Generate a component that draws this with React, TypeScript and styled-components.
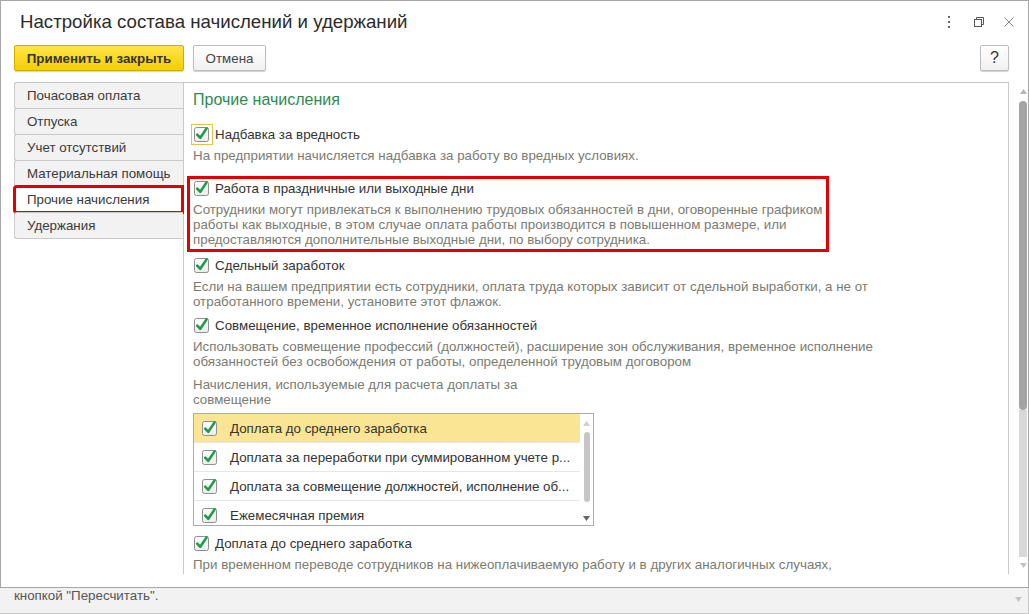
import React from "react";
import styled, { createGlobalStyle } from "styled-components";

const GlobalStyle = createGlobalStyle`
  html, body { margin: 0; padding: 0; }
  body {
    width: 1029px;
    height: 614px;
    overflow: hidden;
    background: #f2f2f2;
    font-family: "Liberation Sans", Arial, sans-serif;
    font-size: 13.33px;
    color: #333;
  }
`;

const Page = styled.div`
  width: 1029px;
  height: 614px;
  display: flex;
  flex-direction: column;
`;

const Window = styled.div`
  box-sizing: border-box;
  width: 1029px;
  height: 588px;
  border: 1px solid #a6a6a6;
  background: #fff;
  display: flex;
  flex-direction: column;
  overflow: hidden;
`;

const TitleBar = styled.div`
  height: 41px;
  display: flex;
  align-items: center;
  padding: 0 14px 0 19px;
`;

const Title = styled.div`
  font-size: 18.67px;
  color: #2b2b2b;
  flex: 1;
`;

const WinIcons = styled.div`
  display: flex;
  align-items: center;
  gap: 20px;
`;

const WinIcon = styled.span`
  width: 10px;
  height: 12px;
  display: flex;
  align-items: center;
  justify-content: center;
`;

const Toolbar = styled.div`
  margin-top: 3px;
  height: 26px;
  display: flex;
  align-items: center;
  gap: 9px;
  padding: 0 19px 0 13px;
`;

const Button = styled.button<{ $primary?: boolean }>`
  box-sizing: border-box;
  height: 26px;
  padding: 0 10px;
  font-family: inherit;
  font-size: 13.33px;
  font-weight: ${(p) => (p.$primary ? "bold" : "normal")};
  color: ${(p) => (p.$primary ? "#333" : "#444")};
  border-radius: 2px;
  border: 1px solid ${(p) => (p.$primary ? "#cfae00" : "#bdbdbd")};
  background: ${(p) =>
    p.$primary
      ? "linear-gradient(#ffe44a, #f4cf00)"
      : "linear-gradient(#ffffff, #f1f1f1)"};
  box-shadow: 0 1px 1px rgba(0, 0, 0, 0.18);
  cursor: default;
`;

const HelpButton = styled(Button)`
  margin-left: auto;
  width: 29px;
  padding: 0;
  font-size: 16px;
  color: #333;
`;

const Body = styled.div`
  flex: 1;
  margin-top: 11px;
  padding: 0 0 13px 13px;
  display: flex;
  min-height: 0;
`;

const Tabs = styled.div`
  width: 169px;
  display: flex;
  flex-direction: column;
`;

const Tab = styled.div<{ $active?: boolean; $marked?: boolean }>`
  box-sizing: border-box;
  height: 27px;
  margin-bottom: -1px;
  display: flex;
  align-items: center;
  padding-left: 12px;
  border: 1px solid #c9c9c9;
  border-right: none;
  border-radius: 3px 0 0 3px;
  background: ${(p) => (p.$active ? "#fff" : "#f2f2f2")};
  color: #3a3a3a;
  outline: ${(p) => (p.$marked ? "3px solid #e20000" : "none")};
  outline-offset: -2px;
  position: relative;
`;

const Panel = styled.div`
  box-sizing: border-box;
  width: 826px;
  border: 1px solid #c9c9c9;
  border-bottom: none;
  padding-left: 9px;
  overflow: hidden;
  display: flex;
  flex-direction: column;
`;

const Heading = styled.div`
  margin-top: 7px;
  line-height: 20px;
  font-size: 16px;
  color: #2e8b4e;
`;

const Item = styled.div<{ $mt: number; $marked?: boolean }>`
  margin-top: ${(p) => p.$mt}px;
  position: relative;
  ${(p) =>
    p.$marked
      ? `&::after {
    content: "";
    position: absolute;
    left: -6px;
    top: -2px;
    width: 636px;
    height: 70px;
    border: 3px solid #e20000;
    pointer-events: none;
  }`
      : ""}
`;

const CheckRow = styled.div`
  height: 20px;
  display: flex;
  align-items: center;
`;

const BoxSlot = styled.span<{ $focus?: boolean }>`
  box-sizing: border-box;
  width: 22px;
  height: 21px;
  margin-left: -2px;
  display: flex;
  align-items: center;
  justify-content: center;
  border: 1px solid ${(p) => (p.$focus ? "#e6c248" : "transparent")};
`;

const Label = styled.span`
  margin-left: 2px;
  color: #333;
`;

const Desc = styled.div`
  margin-top: 4px;
  line-height: 15px;
  color: #7b7b70;
  white-space: nowrap;
`;

const Caption = styled.div<{ $mt: number }>`
  margin-top: ${(p) => p.$mt}px;
  line-height: 15px;
  color: #7b7b70;
`;

const ListBox = styled.div`
  box-sizing: border-box;
  margin-top: 6px;
  width: 401px;
  height: 113px;
  flex-shrink: 0;
  border: 1px solid #ababab;
  display: flex;
  overflow: hidden;
`;

const ListRows = styled.div`
  flex: 1;
  min-width: 0;
`;

const ListRow = styled.div<{ $active?: boolean }>`
  box-sizing: border-box;
  height: 29px;
  border-bottom: 1px solid #e6e6e6;
  background: ${(p) => (p.$active ? "#fae594" : "#fff")};
  display: flex;
  align-items: center;
  padding-left: 8px;
  gap: 12px;
  white-space: nowrap;
  overflow: hidden;
  color: #333;
`;

const ListScroll = styled.div`
  width: 13px;
  display: flex;
  flex-direction: column;
  align-items: center;
  padding: 7px 0 4px;
  box-sizing: border-box;
`;

const Thumb = styled.div<{ $h: number; $color: string; $w?: number }>`
  width: ${(p) => p.$w ?? 6}px;
  height: ${(p) => p.$h}px;
  border-radius: 4px;
  background: ${(p) => p.$color};
`;

const Track = styled.div`
  flex: 1;
  width: 8px;
  background: #d8d8d8;
`;

const ScrollCol = styled.div`
  width: 18px;
  padding: 7px 0 6px 10px;
  box-sizing: border-box;
  display: flex;
  flex-direction: column;
  align-items: center;
`;

const Backdrop = styled.div`
  flex: 1;
  box-sizing: border-box;
  width: 1029px;
  border-bottom: 1px solid #c8c8c8;
  border-right: 1px solid #c8c8c8;
  display: flex;
  align-items: flex-start;
  padding-left: 14px;
  overflow: hidden;
`;

const BackText = styled.div`
  margin-top: 0;
  line-height: 15px;
  color: #555;
  flex: 1;
`;

const BackArrow = styled.div`
  width: 20px;
  margin-top: 9px;
  display: flex;
  justify-content: center;
`;

const Arrow = ({ up, color }: { up?: boolean; color: string }) => (
  <svg width="7" height="5" viewBox="0 0 7 5">
    <path d={up ? "M0 5 L3.5 0 L7 5 Z" : "M0 0 L3.5 5 L7 0 Z"} fill={color} />
  </svg>
);

const Check = () => (
  <svg width="16" height="16" viewBox="0 0 16 16" style={{ overflow: "visible" }}>
    <defs>
      <linearGradient id="cbg" x1="0" y1="0" x2="0" y2="1">
        <stop offset="0" stopColor="#ffffff" />
        <stop offset="1" stopColor="#ececec" />
      </linearGradient>
    </defs>
    <rect x="0.5" y="1.5" width="14" height="14" rx="2" fill="url(#cbg)" stroke="#8e8e8e" />
    <path d="M3.2 8.6 L6.3 11.8 L12.6 2.4" fill="none" stroke="#1f9a48" strokeWidth="2.6" strokeLinecap="round" strokeLinejoin="round" />
  </svg>
);

type Opt = { label: string; desc: string[]; mt: number; focus?: boolean; marked?: boolean };

const options: Opt[] = [
  {
    label: "Надбавка за вредность",
    desc: ["На предприятии начисляется надбавка за работу во вредных условиях."],
    mt: 14,
    focus: true,
  },
  {
    label: "Работа в праздничные или выходные дни",
    desc: [
      "Сотрудники могут привлекаться к выполнению трудовых обязанностей в дни, оговоренные графиком",
      "работы как выходные, в этом случае оплата работы производится в повышенном размере, или",
      "предоставляются дополнительные выходные дни, по выбору сотрудника.",
    ],
    mt: 15,
    marked: true,
  },
  {
    label: "Сдельный заработок",
    desc: [
      "Если на вашем предприятии есть сотрудники, оплата труда которых зависит от сдельной выработки, а не от",
      "отработанного времени, установите этот флажок.",
    ],
    mt: 8,
  },
  {
    label: "Совмещение, временное исполнение обязанностей",
    desc: [
      "Использовать совмещение профессий (должностей), расширение зон обслуживания, временное исполнение",
      "обязанностей без освобождения от работы, определенной трудовым договором",
    ],
    mt: 6,
  },
];

const listItems = [
  "Доплата до среднего заработка",
  "Доплата за переработки при суммированном учете р...",
  "Доплата за совмещение должностей, исполнение об...",
  "Ежемесячная премия",
];

const tabs = [
  "Почасовая оплата",
  "Отпуска",
  "Учет отсутствий",
  "Материальная помощь",
  "Прочие начисления",
  "Удержания",
];

const Option = ({ o }: { o: Opt }) => (
  <Item $mt={o.mt} $marked={o.marked}>
    <CheckRow>
      <BoxSlot $focus={o.focus}>
        <Check />
      </BoxSlot>
      <Label>{o.label}</Label>
    </CheckRow>
    <Desc>
      {o.desc.map((d, i) => (
        <div key={i}>{d}</div>
      ))}
    </Desc>
  </Item>
);

export default function App() {
  return (
    <Page>
      <GlobalStyle />
      <Window>
        <TitleBar>
          <Title>Настройка состава начислений и удержаний</Title>
          <WinIcons>
            <WinIcon>
              <svg width="4" height="12" viewBox="0 0 4 12">
                <rect x="1" y="0" width="2" height="2" fill="#666" />
                <rect x="1" y="5" width="2" height="2" fill="#666" />
                <rect x="1" y="10" width="2" height="2" fill="#666" />
              </svg>
            </WinIcon>
            <WinIcon>
              <svg width="10" height="10" viewBox="0 0 10 10">
                <rect x="0.5" y="2.5" width="7" height="7" fill="none" stroke="#555" />
                <path d="M2.5 2.5 V0.5 H9.5 V7.5 H7.5" fill="none" stroke="#555" />
              </svg>
            </WinIcon>
            <WinIcon>
              <svg width="10" height="10" viewBox="0 0 10 10">
                <path d="M0.5 0.5 L9.5 9.5 M9.5 0.5 L0.5 9.5" stroke="#888" strokeWidth="1" />
              </svg>
            </WinIcon>
          </WinIcons>
        </TitleBar>
        <Toolbar>
          <Button $primary style={{ width: 170 }}>Применить и закрыть</Button>
          <Button style={{ width: 73 }}>Отмена</Button>
          <HelpButton>?</HelpButton>
        </Toolbar>
        <Body>
          <Tabs>
            {tabs.map((t) => (
              <Tab key={t} $active={t === "Прочие начисления"} $marked={t === "Прочие начисления"}>
                {t}
              </Tab>
            ))}
          </Tabs>
          <Panel>
            <Heading>Прочие начисления</Heading>
            {options.map((o) => (
              <Option key={o.label} o={o} />
            ))}
            <Caption $mt={8}>
              Начисления, используемые для расчета доплаты за
              <br />
              совмещение
            </Caption>
            <ListBox>
              <ListRows>
                {listItems.map((l, i) => (
                  <ListRow key={l} $active={i === 0}>
                    <Check />
                    <span>{l}</span>
                  </ListRow>
                ))}
              </ListRows>
              <ListScroll>
                <Arrow up color="#cfcfcf" />
                <div style={{ height: 6 }} />
                <Thumb $h={70} $color="#c6c6c6" />
                <div style={{ flex: 1 }} />
                <Arrow color="#666" />
              </ListScroll>
            </ListBox>
            <Option
              o={{
                label: "Доплата до среднего заработка",
                desc: ["При временном переводе сотрудников на нижеоплачиваемую работу и в других аналогичных случаях,"],
                mt: 7,
              }}
            />
          </Panel>
          <ScrollCol>
            <Arrow up color="#b5b5b5" />
            <div style={{ height: 7 }} />
            <Thumb $h={309} $w={8} $color="#a3a3a3" />
            <Track />
            <div style={{ height: 6 }} />
            <Arrow color="#c4c4c4" />
          </ScrollCol>
        </Body>
      </Window>
      <Backdrop>
        <BackText>кнопкой "Пересчитать".</BackText>
        <BackArrow>
          <Arrow color="#c4c4c4" />
        </BackArrow>
      </Backdrop>
    </Page>
  );
}
